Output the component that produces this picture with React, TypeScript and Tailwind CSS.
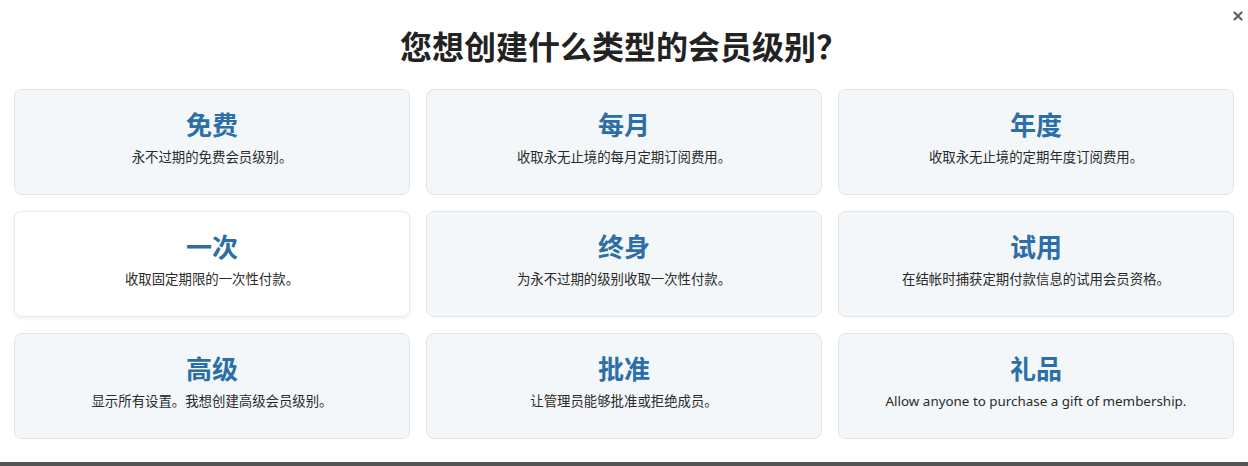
import { X } from 'lucide-react'

interface Level {
  title: string
  desc: string
  active?: boolean
}

const levels: Level[] = [
  { title: '免费', desc: '永不过期的免费会员级别。' },
  { title: '每月', desc: '收取永无止境的每月定期订阅费用。' },
  { title: '年度', desc: '收取永无止境的定期年度订阅费用。' },
  { title: '一次', desc: '收取固定期限的一次性付款。', active: true },
  { title: '终身', desc: '为永不过期的级别收取一次性付款。' },
  { title: '试用', desc: '在结帐时捕获定期付款信息的试用会员资格。' },
  { title: '高级', desc: '显示所有设置。我想创建高级会员级别。' },
  { title: '批准', desc: '让管理员能够批准或拒绝成员。' },
  { title: '礼品', desc: 'Allow anyone to purchase a gift of membership.' },
]

export default function App() {
  return (
    <div className="h-[466px] w-full bg-white flex flex-col font-['Noto_Sans','Noto_Sans_CJK_SC',sans-serif] text-[#222]">
      <div className="relative flex-1 px-[14px]">
        <button className="absolute right-[3px] top-[9px] text-[#666]" title="Close">
          <X size={14} strokeWidth={4} />
        </button>
        <h1 className="pt-[25px] h-[89px] text-center text-[32px] leading-[44px] font-bold text-[#222]">
          您想创建什么类型的会员级别？
        </h1>
        <div className="grid grid-cols-3 gap-4">
          {levels.map(l => (
            <div
              key={l.title}
              className={`h-[106px] rounded-lg border pt-[17px] text-center cursor-pointer ${
                l.active
                  ? 'bg-white border-[#e6e9eb] shadow-[0_1px_5px_rgba(0,0,0,0.08)]'
                  : 'bg-[#f3f7f9] border-[#dfe5e8]'
              }`}
            >
              <div className="text-[26px] leading-[36px] font-bold text-[#2c6ea8]">{l.title}</div>
              <div className="mt-[4px] text-[13.4px] leading-[20px] text-[#2a2a2a]">{l.desc}</div>
            </div>
          ))}
        </div>
      </div>
      <div className="h-[4px] bg-[#555]" />
    </div>
  )
}
